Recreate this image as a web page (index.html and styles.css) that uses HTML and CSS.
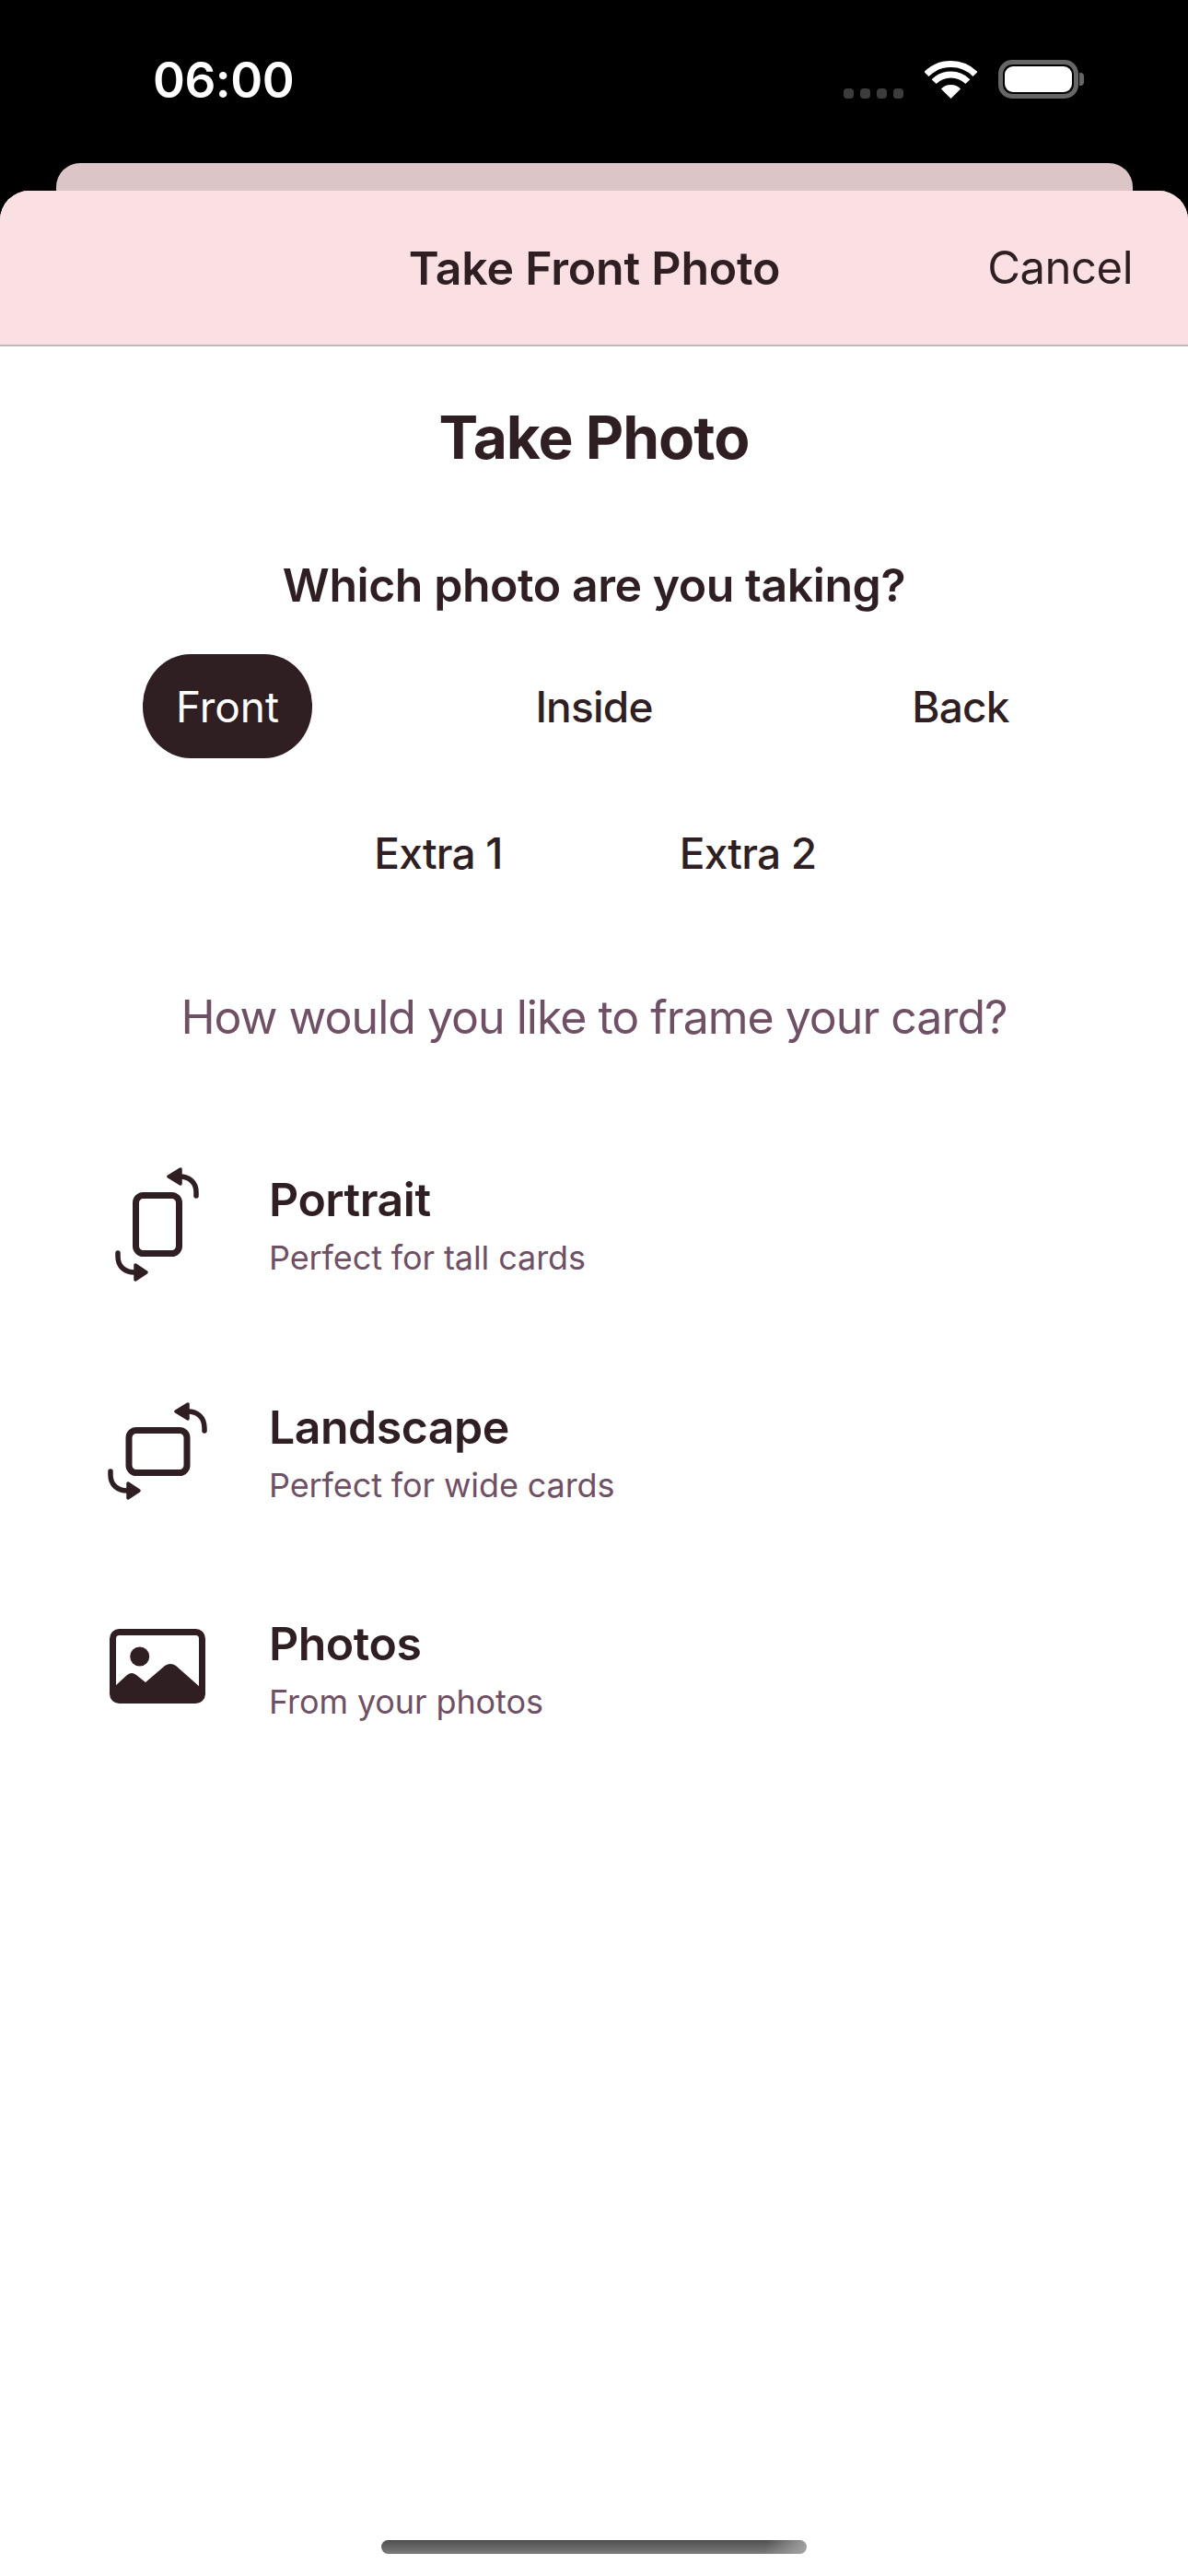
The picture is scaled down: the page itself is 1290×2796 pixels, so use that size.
FILE: index.html

```html
<!DOCTYPE html>
<html lang="en">
<head>
  <meta charset="UTF-8" />
  <meta name="viewport" content="width=device-width, initial-scale=1.0" />
  <title>Take Front Photo</title>
  <link rel="stylesheet" href="styles.css">
</head>
<body>
  <div class="status-bar">
    <span class="time">06:00</span>
    <div class="status-icons">
      <div class="signal"><i></i><i></i><i></i><i></i></div>
      <svg class="wifi" width="57" height="41" viewBox="0 0 57 41">
        <path d="M2 14.5A37.5 37.5 0 0 1 55 14.5" fill="none" stroke="#fff" stroke-width="7"/>
        <path d="M10.1 22.6A26 26 0 0 1 46.9 22.6" fill="none" stroke="#fff" stroke-width="7"/>
        <path d="M28.5 41L17.9 30.4A15 15 0 0 1 39.1 30.4Z" fill="#fff"/>
      </svg>
      <div class="battery"><div class="battery-fill"></div></div>
      <div class="battery-nub"></div>
    </div>
  </div>
  <div class="back-card"></div>

  <div class="sheet">
    <div class="sheet-header">
      <span></span>
      <span class="sheet-title">Take Front Photo</span>
      <span class="cancel">Cancel</span>
    </div>

    <h1>Take Photo</h1>
    <h2>Which photo are you taking?</h2>

    <div class="tabs tabs-three">
      <div class="tab active">Front</div>
      <div class="tab">Inside</div>
      <div class="tab">Back</div>
    </div>
    <div class="tabs tabs-two">
      <div class="tab">Extra 1</div>
      <div class="tab">Extra 2</div>
    </div>

    <p class="question">How would you like to frame your card?</p>

    <div class="options">
      <div class="option">
        <svg class="icon" width="140" height="160" viewBox="0 0 140 160">
          <rect x="47.500" y="47.500" width="47" height="63" rx="8" fill="none" stroke="#2f1f23" stroke-width="7"/>
          <path d="M113 48V44C113 33 105 27 95 27H92" fill="none" stroke="#2f1f23" stroke-width="5.500" stroke-linecap="round"/>
          <path d="M83 27L96 19V35Z" fill="#2f1f23" stroke="#2f1f23" stroke-width="3.500" stroke-linejoin="round"/>
          <path d="M28 110V114C28 125 36 131 46 131H50" fill="none" stroke="#2f1f23" stroke-width="5.500" stroke-linecap="round"/>
          <path d="M59 131L47 123V139Z" fill="#2f1f23" stroke="#2f1f23" stroke-width="3.500" stroke-linejoin="round"/>
        </svg>
        <div class="option-text">
          <div class="option-title">Portrait</div>
          <div class="option-sub">Perfect for tall cards</div>
        </div>
      </div>
      <div class="option">
        <svg class="icon" width="140" height="160" viewBox="0 -3 140 160">
          <rect x="40" y="52.500" width="63" height="46" rx="8" fill="none" stroke="#2f1f23" stroke-width="7"/>
          <path d="M122 53V50C122 38 114 32 104 32H100" fill="none" stroke="#2f1f23" stroke-width="5.500" stroke-linecap="round"/>
          <path d="M91 32L104 24V40Z" fill="#2f1f23" stroke="#2f1f23" stroke-width="3.500" stroke-linejoin="round"/>
          <path d="M20 97V101C20 112 28 118 38 118H42" fill="none" stroke="#2f1f23" stroke-width="5.500" stroke-linecap="round"/>
          <path d="M51 118L39 110V126Z" fill="#2f1f23" stroke="#2f1f23" stroke-width="3.500" stroke-linejoin="round"/>
        </svg>
        <div class="option-text">
          <div class="option-title">Landscape</div>
          <div class="option-sub">Perfect for wide cards</div>
        </div>
      </div>
      <div class="option">
        <svg class="icon" width="140" height="160" viewBox="0 -16 140 160">
          <rect x="22.500" y="23.500" width="97" height="74" rx="7" fill="none" stroke="#2f1f23" stroke-width="7"/>
          <circle cx="51.700" cy="50" r="10.500" fill="#2f1f23"/>
          <path d="M25 82L38 70Q43 66 48 70L58 78L79 60Q85 56 91 60L117 83V98H25Z" fill="#2f1f23"/>
        </svg>
        <div class="option-text">
          <div class="option-title">Photos</div>
          <div class="option-sub">From your photos</div>
        </div>
      </div>
    </div>

    <div class="home-bar"></div>
  </div>
</body>
</html>
```

FILE: styles.css

```css
body {
  font-family: Inter, "Liberation Sans", sans-serif;
  margin: 0;
  height: 2796px;
  display: flex;
  flex-direction: column;
  background: #000;
  color: #2f1f23;
  overflow: hidden;
}

/* status bar */
.status-bar {
  height: 177px;
  flex: none;
  box-sizing: border-box;
  padding: 0 113px 0 166px;
  display: flex;
  justify-content: space-between;
}
.time {
  color: #fff;
  font-size: 53px;
  font-weight: 600;
  letter-spacing: -0.5px;
  line-height: 64px;
  margin-top: 55px;
}
.status-icons {
  display: flex;
  align-items: flex-start;
  padding-top: 65px;
}
.signal {
  display: flex;
  gap: 7px;
  margin-top: 31px;
  margin-right: 23px;
}
.signal i {
  width: 11px;
  height: 11px;
  border-radius: 4px;
  background: #3c3c3c;
}
.wifi {
  margin-top: 1px;
  margin-right: 23px;
}
.battery {
  width: 87px;
  height: 42px;
  box-sizing: border-box;
  border: 5px solid #666;
  border-radius: 15px;
  padding: 2px;
}
.battery-fill {
  height: 100%;
  background: #fff;
  border-radius: 9px;
}
.battery-nub {
  width: 5px;
  height: 14px;
  margin-top: 14px;
  margin-left: 1px;
  background: #666;
  border-radius: 0 4px 4px 0;
}

.back-card {
  height: 30px;
  flex: none;
  margin: 0 60px 0 61px;
  background: #dcc5c7;
  border-radius: 26px 26px 0 0;
}

/* sheet */
.sheet {
  flex: 1;
  display: flex;
  flex-direction: column;
  background: #fff;
  border-radius: 32px 32px 0 0;
}
.sheet-header {
  height: 169px;
  box-sizing: border-box;
  display: grid;
  grid-template-columns: 1fr auto 1fr;
  align-items: center;
  padding: 0 60px 0 61px;
  background: #fae0e3;
  border-bottom: 2px solid #c4b5b7;
  border-radius: 32px 32px 0 0;
}
.sheet-title {
  font-size: 50px;
  font-weight: 600;
  letter-spacing: -0.2px;
}
.cancel {
  justify-self: end;
  font-size: 49px;
  letter-spacing: -0.5px;
}
h1 {
  margin: 59px 0 0;
  text-align: center;
  font-size: 64px;
  font-weight: 700;
  letter-spacing: -1px;
  line-height: 80px;
}
h2 {
  margin: 88px 0 0;
  text-align: center;
  font-size: 50px;
  font-weight: 600;
  letter-spacing: -0.45px;
  line-height: 64px;
}

/* tabs */
.tabs {
  display: grid;
  justify-content: center;
  justify-items: center;
}
.tabs-three {
  grid-template-columns: repeat(3, 398px);
  margin-top: 43px;
}
.tabs-two {
  grid-template-columns: repeat(2, 336px);
  margin-top: 46px;
  padding-right: 2px;
}
.tab {
  height: 113px;
  padding: 0 37px;
  border-radius: 52px / 56px;
  display: flex;
  align-items: center;
  font-size: 46px;
  font-weight: 500;
  letter-spacing: -0.8px;
}
.tab.active {
  background: #2f1f23;
  color: #fff;
  font-weight: 400;
  letter-spacing: 0;
  padding: 0 36px;
}

.question {
  margin: 92px 0 0;
  text-align: center;
  font-size: 50px;
  letter-spacing: -1px;
  line-height: 60px;
  color: #6f5064;
}

/* options */
.options {
  margin-top: 116px;
  padding-left: 100px;
  display: flex;
  flex-direction: column;
  gap: 75px;
}
.option {
  display: flex;
  height: 160px;
}
.option:nth-child(2) {
  margin-top: 12px;
}
.icon {
  flex: none;
}
.option-text {
  margin: 22px 0 0 52px;
}
.option-title {
  font-size: 50px;
  font-weight: 600;
  letter-spacing: -0.5px;
  line-height: 60px;
}
.option-sub {
  margin-top: 8px;
  font-size: 36px;
  letter-spacing: -0.1px;
  line-height: 50px;
  color: #6f5064;
}

.home-bar {
  width: 462px;
  height: 15px;
  margin: auto auto 24px;
  flex: none;
  border-radius: 8px;
  background: linear-gradient(100deg, transparent 90%, rgba(170, 170, 170, 0.9) 100%), linear-gradient(180deg, #4e4e4e, #7c7c7c);
}
```
